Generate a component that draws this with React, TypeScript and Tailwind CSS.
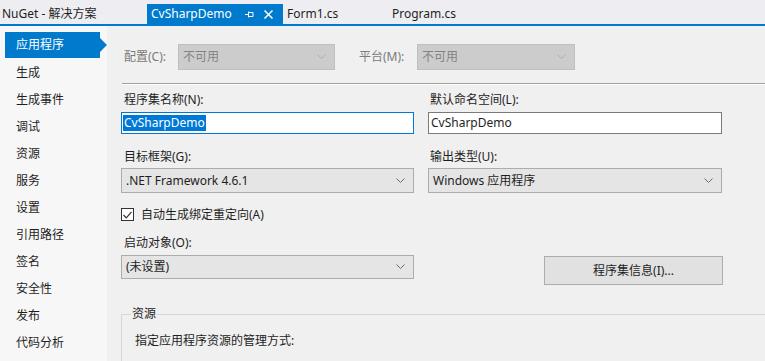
import React from 'react';

const navItems = [
  '应用程序',
  '生成',
  '生成事件',
  '调试',
  '资源',
  '服务',
  '设置',
  '引用路径',
  '签名',
  '安全性',
  '发布',
  '代码分析',
];

function Chevron({ color }: { color: string }) {
  return (
    <svg width="9" height="6" viewBox="0 0 9 6">
      <path d="M0.5 0.5 L4.5 4.5 L8.5 0.5" fill="none" stroke={color} strokeWidth="1" />
    </svg>
  );
}

function Select({ value, className = '' }: { value: string; className?: string }) {
  return (
    <div
      className={`flex items-center justify-between border border-[#acacac] bg-[#e5e5e5] pl-[4px] pr-[8px] text-[#1e1e1e] ${className}`}
    >
      <span>{value}</span>
      <Chevron color="#6a6a6a" />
    </div>
  );
}

function DisabledSelect({ className = '' }: { className?: string }) {
  return (
    <div
      className={`flex h-[26px] items-center justify-between border border-[#bfbfbf] bg-[#cccccc] pl-[4px] pr-[8px] text-[#838383] ${className}`}
    >
      <span>不可用</span>
      <Chevron color="#b0b0b0" />
    </div>
  );
}

export default function App() {
  return (
    <div className="flex h-[361px] w-[765px] flex-col overflow-hidden bg-[#f0f0f0] font-['Noto_Sans','Noto_Sans_CJK_SC',sans-serif] text-[12px] leading-[16px] text-[#1e1e1e]">
      {/* Document tabs */}
      <div className="flex h-[24px] shrink-0 bg-[#eeeef2]">
        <div className="flex w-[147px] items-center pl-[2px] pt-[4px]">NuGet - 解决方案</div>
        <div className="mt-[4px] flex w-[136px] items-center bg-[#007acc] pl-[4px] text-white">
          <span>CvSharpDemo</span>
          <svg className="ml-[13px]" width="9" height="7" viewBox="0 0 9 7">
            <path d="M0 3.5 H3 M3.5 0.5 V6.5 M3.5 1.5 H8 V5.5 H3.5" fill="none" stroke="white" strokeWidth="1" />
          </svg>
          <svg className="ml-[10px]" width="9" height="9" viewBox="0 0 9 9">
            <path d="M0.5 0.5 L8.5 8.5 M8.5 0.5 L0.5 8.5" fill="none" stroke="white" strokeWidth="1.5" />
          </svg>
        </div>
        <div className="flex w-[105px] items-center pl-[4px] pt-[4px]">Form1.cs</div>
        <div className="flex items-center pl-[4px] pt-[4px]">Program.cs</div>
      </div>
      <div className="h-[2px] shrink-0 bg-[#007acc]" />

      <div className="flex min-h-0 flex-1 overflow-hidden">
        {/* Sidebar */}
        <div className="w-[107px] shrink-0 bg-[#f7f7f7] pt-[6px]">
          {navItems.map((item, i) =>
            i === 0 ? (
              <div key={item} className="flex h-[27px] items-start pl-[5px]">
                <div className="flex h-[26px] w-[96px] items-center bg-[#007acc] pl-[11px] text-white">{item}</div>
                <svg width="7" height="26" viewBox="0 0 7 26">
                  <path d="M0 6 L7 13 L0 20 Z" fill="#007acc" />
                </svg>
              </div>
            ) : (
              <div key={item} className="flex h-[27px] items-center pl-[16px]">
                {item}
              </div>
            ),
          )}
        </div>

        {/* Main */}
        <div className="flex min-w-0 flex-1 flex-col overflow-hidden">
          <div className="flex shrink-0 items-center pl-[17px] pt-[18px]">
            <span className="w-[54px] text-[#7a7a7a]">配置(C):</span>
            <DisabledSelect className="w-[157px]" />
            <span className="ml-[24px] w-[58px] text-[#7a7a7a]">平台(M):</span>
            <DisabledSelect className="w-[158px]" />
          </div>
          <div className="ml-[15px] mt-[13px] shrink-0 border-t border-b border-t-[#a0a0a0] border-b-white" />

          <div className="flex shrink-0 flex-col pl-[14px]">
            <div className="mt-[7px] grid grid-cols-[293px_294px] gap-x-[14px]">
              <span className="h-[16px] pl-[3px]">程序集名称(N):</span>
              <span className="h-[16px] pl-[2px]">默认命名空间(L):</span>
              <div className="mt-[4px] flex h-[22px] items-center border border-[#0078d7] bg-white pl-[1px]">
                <span className="bg-[#0078d7] px-[1px] text-white">CvSharpDemo</span>
              </div>
              <div className="mt-[4px] flex h-[22px] items-center border border-[#7a7a7a] bg-white pl-[2px]">
                CvSharpDemo
              </div>

              <span className="mt-[15px] h-[16px] pl-[3px]">目标框架(G):</span>
              <span className="mt-[15px] h-[16px] pl-[2px]">输出类型(U):</span>
              <Select value=".NET Framework 4.6.1" className="mt-[3px] h-[25px]" />
              <Select value="Windows 应用程序" className="mt-[3px] h-[25px]" />
            </div>

            <div className="mt-[15px] flex h-[13px] items-center">
              <div className="flex h-[13px] w-[13px] items-center justify-center border border-[#333333] bg-white">
                <svg width="9" height="8" viewBox="0 0 9 8">
                  <path d="M0.5 4 L3.3 6.8 L8.5 0.8" fill="none" stroke="#333333" strokeWidth="1.2" />
                </svg>
              </div>
              <span className="ml-[7px]">自动生成绑定重定向(A)</span>
            </div>

            <span className="mt-[14px] h-[16px] pl-[3px]">启动对象(O):</span>
            <div className="mt-[4px] grid grid-cols-[293px_294px] items-start gap-x-[14px]">
              <Select value="(未设置)" className="h-[24px]" />
              <div className="flex justify-end">
                <button className="mt-[1px] mr-[-1px] h-[29px] w-[179px] border border-[#adadad] bg-[#e1e1e1]">
                  程序集信息(I)...
                </button>
              </div>
            </div>

            <fieldset className="mt-[21px] w-[700px] border-0 border-l border-t border-[#d5d5d5] pb-[20px] pl-[13px]">
              <legend className="ml-[-4px] px-[1px]">资源</legend>
              <div className="mt-[11px]">指定应用程序资源的管理方式:</div>
            </fieldset>
          </div>
        </div>
      </div>
    </div>
  );
}
